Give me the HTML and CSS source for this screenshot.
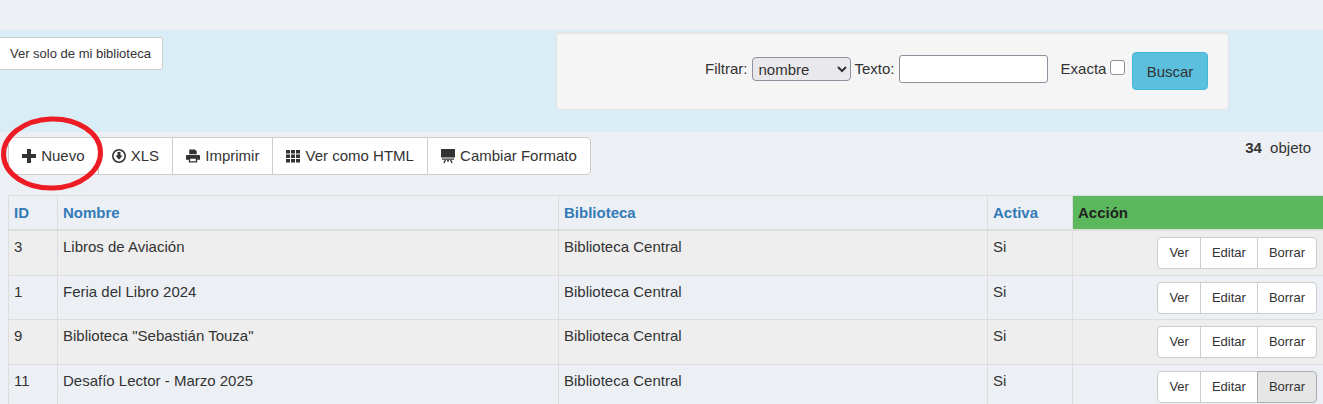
FILE: index.html
```html
<!DOCTYPE html>
<html lang="es">
<head>
    <meta charset="UTF-8">
    <title>Listado de bibliotecas</title>
    <link rel="stylesheet" href="styles.css">
</head>
<body>
    <div class="top-band">
        <a class="btn btn-sm only-mine">Ver solo de mi biblioteca</a>
        <form class="filter-well">
            <label>Filtrar:</label>
            <select class="filter-select"><option>nombre</option></select>
            <label>Texto:</label>
            <input class="filter-text" type="text">
            <label class="exact-label">Exacta</label>
            <input class="filter-check" type="checkbox">
            <button class="btn-search" type="button">Buscar</button>
        </form>
    </div>

    <div class="toolbar">
        <div class="btn-group">
            <a class="btn">
                <svg class="icon" viewBox="0 0 14 14"><path d="M5 0h4v5h5v4H9v5H5V9H0V5h5z"/></svg>
                Nuevo
            </a>
            <a class="btn">
                <svg class="icon" viewBox="0 0 14 14"><path fill-rule="evenodd" d="M7 0a7 7 0 1 1 0 14A7 7 0 0 1 7 0zm0 1.6a5.4 5.4 0 1 0 0 10.8A5.4 5.4 0 0 0 7 1.6zM5.5 3h3v3.5h2L7 10.8 3.500 6.500h2z"/></svg>
                XLS
            </a>
            <a class="btn">
                <svg class="icon" viewBox="0 0 15 14"><path fill-rule="evenodd" d="M3.500 0h6l2 2v3h-8zM1 6h13a1 1 0 0 1 1 1v4h-3v3H3v-3H0V7a1 1 0 0 1 1-1zm3.500 4v2.600h6V10z"/></svg>
                Imprimir
            </a>
            <a class="btn">
                <svg class="icon" viewBox="0 0 14 14"><path d="M0 1h4v3.500H0zM5 1h4v3.500H5zM10 1h4v3.500h-4zM0 5.500h4V9H0zM5 5.500h4V9H5zM10 5.500h4V9h-4zM0 10h4v3.500H0zM5 10h4v3.500H5zM10 10h4v3.500h-4z"/></svg>
                Ver como HTML
            </a>
            <a class="btn">
                <svg class="icon" viewBox="0 0 14 14"><path d="M0 0h14v8.500H0zM1 9.500h12v1.200H1zM3.500 11h1.500l-1.200 3H2.300zM9 11h1.500l1.200 3h-1.500zM6 11h2v1.500H6z"/></svg>
                Cambiar Formato
            </a>
        </div>
        <div class="count"><b>34</b> objeto</div>
    </div>

    <table class="data-table">
        <thead>
            <tr>
                <th class="col-id"><a>ID</a></th>
                <th class="col-name"><a>Nombre</a></th>
                <th class="col-lib"><a>Biblioteca</a></th>
                <th class="col-active"><a>Activa</a></th>
                <th class="col-action">Acción</th>
            </tr>
        </thead>
        <tbody>
            <tr>
                <td>3</td><td>Libros de Aviación</td><td>Biblioteca Central</td><td>Si</td>
                <td class="actions"><div class="btn-group btn-group-sm"><a class="btn">Ver</a><a class="btn">Editar</a><a class="btn">Borrar</a></div></td>
            </tr>
            <tr>
                <td>1</td><td>Feria del Libro 2024</td><td>Biblioteca Central</td><td>Si</td>
                <td class="actions"><div class="btn-group btn-group-sm"><a class="btn">Ver</a><a class="btn">Editar</a><a class="btn">Borrar</a></div></td>
            </tr>
            <tr>
                <td>9</td><td>Biblioteca "Sebastián Touza"</td><td>Biblioteca Central</td><td>Si</td>
                <td class="actions"><div class="btn-group btn-group-sm"><a class="btn">Ver</a><a class="btn">Editar</a><a class="btn">Borrar</a></div></td>
            </tr>
            <tr>
                <td>11</td><td>Desafío Lector - Marzo 2025</td><td>Biblioteca Central</td><td>Si</td>
                <td class="actions"><div class="btn-group btn-group-sm"><a class="btn">Ver</a><a class="btn">Editar</a><a class="btn hover">Borrar</a></div></td>
            </tr>
        </tbody>
    </table>

    <!-- anotacion a mano sobre la captura -->
    <svg class="annotation" width="110" height="80" viewBox="0 0 110 80">
        <ellipse cx="52" cy="38.500" rx="48.500" ry="34.500" fill="none" stroke="#ed1c24" stroke-width="5" transform="rotate(-2 52 38.500)"/>
    </svg>
</body>
</html>
```

FILE: styles.css
```css
html, body {
    height: 100%;
    overflow: hidden;
}
body {
    margin: 0;
    padding-top: 30px;
    box-sizing: border-box;
    position: relative;
    background-color: #ecf0f5;
    font-family: 'Liberation Sans', Arial, sans-serif;
    font-size: 15px;
    line-height: 20px;
    color: #333;
}
a {
    text-decoration: none;
}

/* botones */
.btn {
    display: block;
    box-sizing: border-box;
    padding: 8px 13px;
    background-color: #fff;
    border: 1px solid #ccc;
    color: #333;
    white-space: nowrap;
}
.btn-sm {
    padding: 5px 10px;
    font-size: 13px;
    line-height: 21px;
}
.btn.hover {
    background-color: #e6e6e6;
    border-color: #adadad;
}
.btn-group {
    display: inline-flex;
}
.btn-group .btn {
    margin-left: -1px;
}
.btn-group .btn:first-child {
    margin-left: 0;
    border-radius: 4px 0 0 4px;
}
.btn-group .btn:last-child {
    border-radius: 0 4px 4px 0;
}
.btn-group-sm .btn {
    padding: 5px 11px;
    font-size: 13px;
    line-height: 20px;
}
.icon {
    display: inline-block;
    width: 14px;
    height: 14px;
    margin-right: 1px;
    vertical-align: -2px;
    fill: #333;
}

/* banda superior */
.top-band {
    display: flex;
    align-items: flex-start;
    height: 102px;
    background-color: #d9edf7;
}
.only-mine {
    margin: 7px 0 0 -10px;
    padding-left: 19px;
    padding-right: 11px;
    border-radius: 3px;
}
.filter-well {
    display: flex;
    align-items: center;
    box-sizing: border-box;
    width: 673px;
    height: 78px;
    margin: 2px 94px 0 auto;
    padding: 0 20px 0 148px;
    background-color: #f5f5f5;
    border: 1px solid #e3e3e3;
    border-radius: 4px;
    box-shadow: inset 0 1px 1px rgba(0,0,0,0.05);
}
.filter-well label {
    margin: 0 4px 4px 0;
}
.filter-select {
    box-sizing: border-box;
    width: 99px;
    height: 24px;
    margin: 0 4px 4px 0;
    padding: 0 0 0 2px;
    background-color: #e9e9ed;
    border: 1px solid #8f8f9d;
    border-radius: 4px;
    font-family: inherit;
    font-size: 15px;
    color: #333;
}
.filter-text {
    box-sizing: border-box;
    width: 149px;
    height: 28px;
    margin: 0 0 4px 0;
    background: #fff;
    border: 1px solid #8f8f9d;
    border-radius: 3px;
}
.filter-well .exact-label {
    margin-left: 13px;
}
.filter-check {
    appearance: none;
    box-sizing: border-box;
    width: 15px;
    height: 15px;
    margin: 0 4px 7px 0;
    background: #fff;
    border: 1px solid #8f8f9d;
    border-radius: 3px;
}
.btn-search {
    box-sizing: border-box;
    width: 76px;
    height: 38px;
    margin-left: auto;
    background-color: #5bc0de;
    border: 1px solid #46b8da;
    border-radius: 4px;
    font-family: inherit;
    font-size: 15px;
    color: #333;
}

/* barra de herramientas */
.toolbar {
    display: flex;
    justify-content: space-between;
    height: 58px;
    padding: 5px 12px 0 8px;
}
.toolbar .btn-group {
    align-self: flex-start;
    height: 38px;
}
.count {
    margin-top: 1px;
}
.count b {
    margin-right: 4px;
}

/* tabla */
.data-table {
    table-layout: fixed;
    width: 1316px;
    margin-left: 8px;
    border-collapse: collapse;
}
.data-table th,
.data-table td {
    box-sizing: border-box;
    border: 1px solid #ddd;
    text-align: left;
    vertical-align: top;
}
.data-table th {
    padding: 7px 5px 6px;
    border-bottom-width: 2px;
    font-weight: bold;
}
.data-table th a {
    color: #337ab7;
}
.data-table td {
    padding: 6px 5px 5.500px;
}
.data-table tbody tr:nth-child(odd) {
    background-color: #eee;
}
.col-id { width: 49px; }
.col-name { width: 501px; }
.col-lib { width: 429px; }
.col-active { width: 85px; }
.data-table .col-action {
    background-color: #5cb85c;
    color: #222;
}
.data-table td.actions {
    padding-right: 6px;
    text-align: right;
}
.actions .btn-group {
    vertical-align: top;
}

.annotation {
    position: absolute;
    left: 0;
    top: 115px;
}
```
